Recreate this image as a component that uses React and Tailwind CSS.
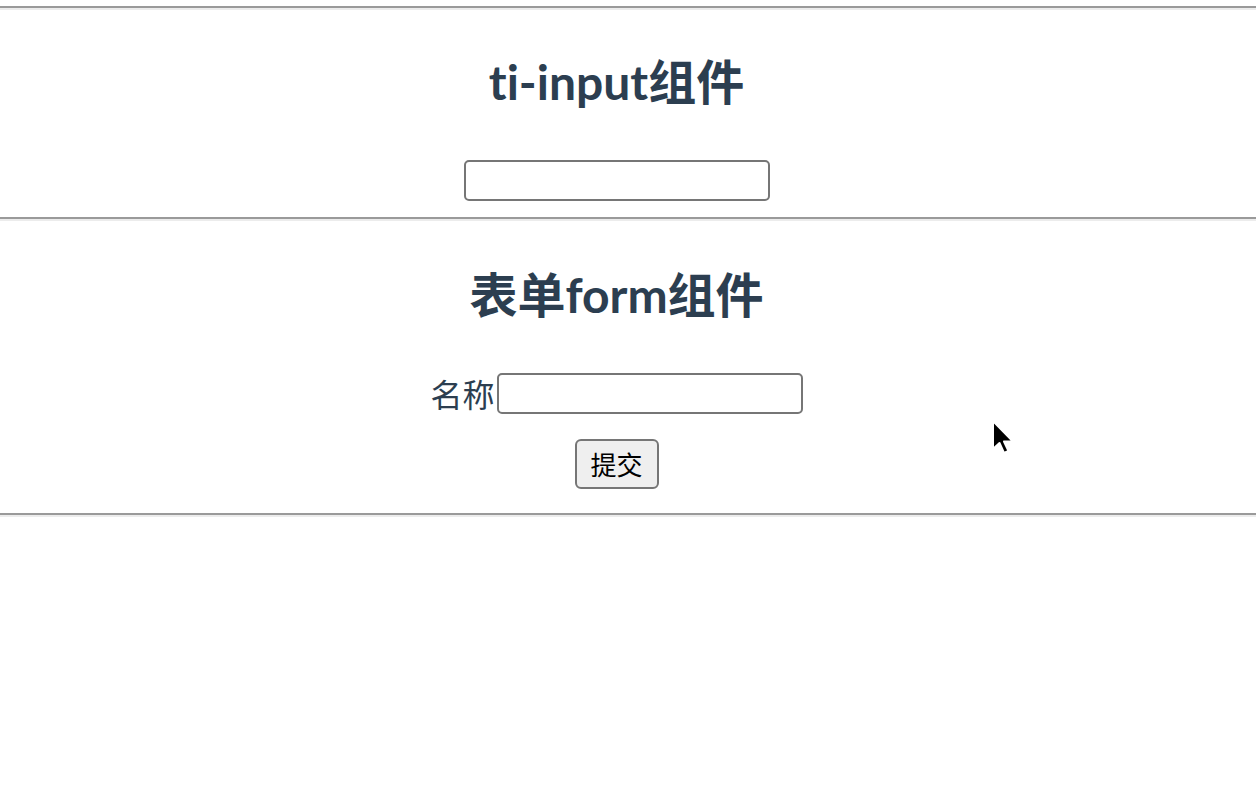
import React from 'react';

const heading = '"Lato", "Noto Sans CJK SC", sans-serif';
const body = '"Lato", "Noto Sans CJK SC", sans-serif';

function Rule() {
  return <div className="h-[4px] w-full border-t-2 border-b-2 border-t-[#9a9a9a] border-b-[#ececec]" />;
}

function Cursor() {
  return (
    <svg className="absolute left-[990px] top-[419px]" width="26" height="38" viewBox="0 0 26 38">
      <path d="M3 2 L3 30 L9.5 24 L14 34 L18.5 32 L14 22.5 L23 22.5 Z" fill="#000" stroke="#fff" strokeWidth="2" strokeLinejoin="round" />
    </svg>
  );
}

export default function App() {
  return (
    <div className="relative min-h-[790px] bg-white text-[#2c3e50]" style={{ fontFamily: body }}>
      <div className="pt-[6px]">
        <Rule />
        <div className="flex flex-col items-center pr-[23px]">
          <h2
            className="mt-[43px] mb-[40px] text-[48px] font-bold leading-[58px] [font-variant-ligatures:none]"
            style={{ fontFamily: heading }}
          >
            ti-input组件
          </h2>
          <input
            type="text"
            className="mt-[9px] h-[41px] w-[306px] rounded-[5px] border-2 border-[#767676] bg-white"
          />
        </div>
        <div className="mt-[16px]">
          <Rule />
        </div>
        <form className="flex flex-col items-center pr-[23px]" onSubmit={(e) => e.preventDefault()}>
          <h2
            className="mt-[45px] mb-[40px] text-[48px] font-bold leading-[58px] [font-variant-ligatures:none]"
            style={{ fontFamily: heading }}
          >
            表单form组件
          </h2>
          <div className="mt-[9px] flex items-center">
            <label className="text-[32px] leading-[41px]" style={{ fontFamily: '"Noto Sans CJK SC", sans-serif' }}>名称</label>
            <input
              type="text"
              className="ml-[2px] h-[41px] w-[306px] rounded-[5px] border-2 border-[#767676] bg-white"
            />
          </div>
          <button
            type="submit"
            className="mt-[25px] h-[50px] w-[84px] rounded-[6px] border-2 border-[#767676] bg-[#efefef] text-[26px] leading-none text-black"
            style={{ fontFamily: '"Noto Sans CJK SC", sans-serif' }}
          >
            提交
          </button>
        </form>
        <div className="mt-[24px]">
          <Rule />
        </div>
      </div>
      <Cursor />
    </div>
  );
}
